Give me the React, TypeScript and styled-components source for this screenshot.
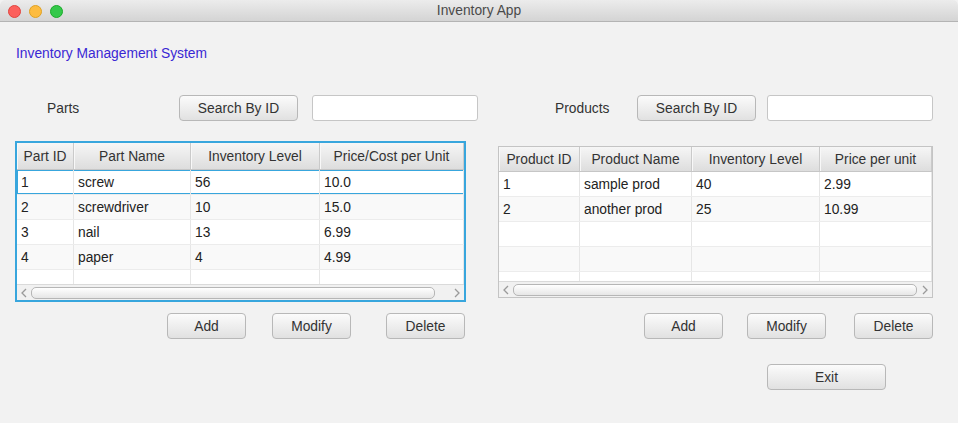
import React from "react";
import styled, { createGlobalStyle } from "styled-components";

const GlobalStyle = createGlobalStyle`
  html, body {
    margin: 0;
    padding: 0;
    background: #f2f2f2;
  }
  body {
    font-family: "Liberation Sans", Arial, sans-serif;
    font-size: 13.8px;
    color: #333;
  }
`;

interface ITable {
  headers: string[];
  columns: string;
  rows: string[][];
  fillerRows: number;
  headerHeight: number;
  bodyHeight: number;
  focused?: boolean;
  thumbLeft: number;
  thumbRight: number;
}

const parts: string[][] = [
  ["1", "screw", "56", "10.0"],
  ["2", "screwdriver", "10", "15.0"],
  ["3", "nail", "13", "6.99"],
  ["4", "paper", "4", "4.99"],
];

const products: string[][] = [
  ["1", "sample prod", "40", "2.99"],
  ["2", "another prod", "25", "10.99"],
];

const Chevron: React.FC<{ dir: "left" | "right" }> = ({ dir }) => (
  <svg width="6" height="10" viewBox="0 0 6 10">
    <path
      d={dir === "left" ? "M5 1 L1 5 L5 9" : "M1 1 L5 5 L1 9"}
      fill="none"
      stroke="#9a9a9a"
      strokeWidth="1.3"
    />
  </svg>
);

const DataTable: React.FC<ITable> = ({
  headers,
  columns,
  rows,
  fillerRows,
  headerHeight,
  bodyHeight,
  focused,
  thumbLeft,
  thumbRight,
}) => {
  const all = [...rows, ...Array.from({ length: fillerRows }, () => headers.map(() => ""))];
  return (
    <TableFrame $focused={focused}>
      <HeaderRow $columns={columns} $height={headerHeight}>
        {headers.map((h) => (
          <HeaderCell key={h}>{h}</HeaderCell>
        ))}
      </HeaderRow>
      <Body style={{ height: bodyHeight }}>
        {all.map((row, i) => (
          <Row key={i} $columns={columns} $odd={i % 2 === 1} $focus={focused && i === 0}>
            {row.map((c, j) => (
              <Cell key={j}>{c}</Cell>
            ))}
          </Row>
        ))}
      </Body>
      <ScrollBar>
        <Chevron dir="left" />
        <Thumb $left={thumbLeft} $right={thumbRight} />
        <Chevron dir="right" />
      </ScrollBar>
    </TableFrame>
  );
};

export default function App() {
  return (
    <Window>
      <GlobalStyle />
      <TitleBar>
        <Lights>
          <Light $color="#fc605c" $edge="#e0443e" />
          <Light $color="#fdbc40" $edge="#dea123" />
          <Light $color="#34c84a" $edge="#1aab29" />
        </Lights>
        <Title>Inventory App</Title>
      </TitleBar>
      <Content>
        <Heading>Inventory Management System</Heading>
        <Columns>
          <Column $width={463}>
            <SearchRow>
              <Label $width={164} $pad={32}>Parts</Label>
              <Button $width={119}>Search By ID</Button>
              <SearchInput $gap={14} />
            </SearchRow>
            <TableSlot $top={20} $width={451}>
              <DataTable
                headers={["Part ID", "Part Name", "Inventory Level", "Price/Cost per Unit"]}
                columns="57px 117px 129px 1fr"
                rows={parts}
                fillerRows={1}
                headerHeight={26}
                bodyHeight={114}
                focused
                thumbLeft={8}
                thumbRight={23}
              />
            </TableSlot>
            <ButtonRow $top={11} $pad={152}>
              <Button $width={79}>Add</Button>
              <Button $width={79} $gap={26}>Modify</Button>
              <Button $width={79} $gap={35}>Delete</Button>
            </ButtonRow>
          </Column>
          <Column $width={435} $gap={20}>
            <SearchRow>
              <Label $width={139} $pad={57}>Products</Label>
              <Button $width={119}>Search By ID</Button>
              <SearchInput $gap={11} />
            </SearchRow>
            <TableSlot $top={25} $width={435}>
              <DataTable
                headers={["Product ID", "Product Name", "Inventory Level", "Price per unit"]}
                columns="81px 112px 128px 1fr"
                rows={products}
                fillerRows={3}
                headerHeight={24}
                bodyHeight={109}
                thumbLeft={8}
                thumbRight={9}
              />
            </TableSlot>
            <ButtonRow $top={15} $pad={146}>
              <Button $width={79}>Add</Button>
              <Button $width={79} $gap={24}>Modify</Button>
              <Button $width={79} $gap={28}>Delete</Button>
            </ButtonRow>
            <ButtonRow $top={25} $pad={269}>
              <Button $width={119}>Exit</Button>
            </ButtonRow>
          </Column>
        </Columns>
      </Content>
    </Window>
  );
}

const Window = styled.div`
  width: 958px;
  height: 423px;
  overflow: hidden;
  background: #f2f2f2;
  border-radius: 5px 5px 0 0;
`;

const TitleBar = styled.div`
  position: relative;
  display: flex;
  align-items: center;
  justify-content: center;
  height: 21px;
  background: linear-gradient(#ececec, #d4d4d4);
  border-bottom: 1px solid #b4b4b4;
  border-radius: 5px 5px 0 0;
`;

const Lights = styled.div`
  position: absolute;
  left: 8px;
  top: 5px;
  display: flex;
  gap: 8px;
`;

const Light = styled.span<{ $color: string; $edge: string }>`
  width: 11px;
  height: 11px;
  border-radius: 50%;
  background: ${(p) => p.$color};
  border: 0.5px solid ${(p) => p.$edge};
`;

const Title = styled.div`
  color: #4a4a4a;
`;

const Content = styled.div`
  padding-top: 24px;
`;

const Heading = styled.div`
  margin-left: 16px;
  line-height: 16px;
  color: #3a28d4;
`;

const Columns = styled.div`
  display: flex;
  margin-top: 33px;
  padding-left: 15px;
`;

const Column = styled.div<{ $width: number; $gap?: number }>`
  display: flex;
  flex-direction: column;
  width: ${(p) => p.$width}px;
  margin-left: ${(p) => p.$gap ?? 0}px;
`;

const SearchRow = styled.div`
  display: flex;
  align-items: center;
  height: 26px;
`;

const Label = styled.div<{ $width: number; $pad: number }>`
  width: ${(p) => p.$width}px;
  padding-left: ${(p) => p.$pad}px;
  box-sizing: border-box;
  color: #333;
`;

const Button = styled.button<{ $width: number; $gap?: number }>`
  width: ${(p) => p.$width}px;
  height: 26px;
  margin: 0 0 0 ${(p) => p.$gap ?? 0}px;
  padding: 0;
  font-family: "Liberation Sans", Arial, sans-serif;
  font-size: 13.8px;
  color: #333;
  background: linear-gradient(#fbfbfb, #e1e1e1);
  border: 1px solid #b8b8b8;
  border-radius: 4px;
`;

const SearchInput = styled.input<{ $gap: number }>`
  width: 166px;
  height: 26px;
  margin-left: ${(p) => p.$gap}px;
  box-sizing: border-box;
  background: #fff;
  border: 1px solid #c6c6c6;
  border-radius: 3px;
`;

const TableSlot = styled.div<{ $top: number; $width: number }>`
  margin-top: ${(p) => p.$top}px;
  width: ${(p) => p.$width}px;
`;

const ButtonRow = styled.div<{ $top: number; $pad: number }>`
  display: flex;
  margin-top: ${(p) => p.$top}px;
  padding-left: ${(p) => p.$pad}px;
`;

const TableFrame = styled.div<{ $focused?: boolean }>`
  display: flex;
  flex-direction: column;
  background: #fff;
  border: ${(p) => (p.$focused ? "2px solid #38a6dd" : "1px solid #c4c4c4")};
`;

const HeaderRow = styled.div<{ $columns: string; $height: number }>`
  display: grid;
  grid-template-columns: ${(p) => p.$columns};
  height: ${(p) => p.$height}px;
  border-bottom: 1px solid #c6c6c6;
  background: linear-gradient(#f6f6f6, #dddddd);
`;

const HeaderCell = styled.div`
  display: flex;
  align-items: center;
  justify-content: center;
  white-space: nowrap;
  overflow: hidden;
  border-right: 1px solid #cacaca;
  box-shadow: inset 1px 0 0 #f8f8f8;
  color: #333;
`;

const Body = styled.div`
  overflow: hidden;
`;

const Row = styled.div<{ $columns: string; $odd: boolean; $focus?: boolean }>`
  display: grid;
  grid-template-columns: ${(p) => p.$columns};
  height: 25px;
  box-sizing: border-box;
  background: ${(p) => (p.$odd ? "#f9f9f9" : "#fff")};
  border-bottom: 1px solid #ececec;
  box-shadow: ${(p) => (p.$focus ? "inset 0 0 0 1px #38a6dd" : "none")};
`;

const Cell = styled.div`
  display: flex;
  align-items: center;
  padding: 0 4px;
  border-right: 1px solid #e6e6e6;
  color: #222;
  white-space: nowrap;
  overflow: hidden;
`;

const ScrollBar = styled.div`
  display: flex;
  align-items: center;
  gap: 6px;
  height: 15px;
  padding: 0 4px;
  background: #f1f1f1;
  border-top: 1px solid #dadada;
`;

const Thumb = styled.div<{ $left: number; $right: number }>`
  flex: 1;
  height: 10px;
  margin: 0 ${(p) => p.$right - 10}px 0 ${(p) => p.$left - 10}px;
  border: 1px solid #b6b6b6;
  border-radius: 5px;
  background: linear-gradient(#ffffff, #e6e6e6);
`;
